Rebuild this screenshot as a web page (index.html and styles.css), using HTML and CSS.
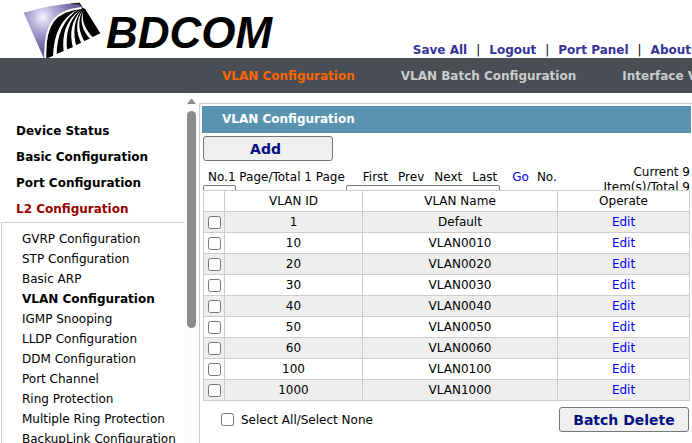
FILE: index.html
```html
<!DOCTYPE html>
<html lang="en">
<head>
<meta charset="utf-8">
<title>VLAN Configuration</title>
<link rel="stylesheet" href="styles.css">
</head>
<body>
<header class="top">
  <div class="brand">
    <svg class="mark" viewBox="0 0 240 174" aria-hidden="true">
      <defs>
        <radialGradient id="glow" cx="60" cy="52" r="100" gradientUnits="userSpaceOnUse">
          <stop offset="0" stop-color="#f6f4ff"/>
          <stop offset=".35" stop-color="#b9b2da"/>
          <stop offset=".8" stop-color="#7c72ac"/>
          <stop offset="1" stop-color="#6b629c"/>
        </radialGradient>
      </defs>
      <path fill="url(#glow)" d="M2 38Q88 12 170 8L182 26L120 60L74 174H62Z"/>
      <path fill="#222" d="M140 11Q156 8 170 8L180 25L168 14Z"/>
      <path fill="#000" d="M180 24Q118 26 92 60Q66 98 70 176L91 167L96 164L124 152L129 149L153 140L158 136L178 127L183 124L204 114L209 111L232 100L186 26Z"/>
      <g fill="none" stroke="#fff" stroke-width="6">
        <path d="M176 24Q116 30 91 62Q64 98 67 176"/>
      </g>
      <g fill="#fff">
        <path d="M166 28Q92 64 90 172L101 168Q100 74 166 28Z"/>
        <path d="M171 30Q112 72 122 156L133 154Q122 76 171 30Z"/>
        <path d="M175 31Q132 76 150 144L161 142Q142 78 175 31Z"/>
        <path d="M178 32Q148 76 176 132L187 128Q156 80 178 32Z"/>
        <path d="M181 33Q164 76 202 118L212 114Q172 76 181 33Z"/>
      </g>
    </svg>
    <span class="name">BDCOM</span>
  </div>
  <nav class="tools">
    <a href="#">Save All</a><span>|</span><a href="#">Logout</a><span>|</span><a href="#">Port Panel</a><span>|</span><a href="#">About</a>
  </nav>
</header>
<nav class="tabs">
  <a class="on" href="#">VLAN Configuration</a>
  <a href="#">VLAN Batch Configuration</a>
  <a href="#">Interface VLAN</a>
</nav>
<div class="main">
  <nav class="side">
    <a class="group" href="#">Device Status</a>
    <a class="group" href="#">Basic Configuration</a>
    <a class="group" href="#">Port Configuration</a>
    <a class="group open" href="#">L2 Configuration</a>
    <div class="sub">
      <a href="#">GVRP Configuration</a>
      <a href="#">STP Configuration</a>
      <a href="#">Basic ARP</a>
      <a class="current" href="#">VLAN Configuration</a>
      <a href="#">IGMP Snooping</a>
      <a href="#">LLDP Configuration</a>
      <a href="#">DDM Configuration</a>
      <a href="#">Port Channel</a>
      <a href="#">Ring Protection</a>
      <a href="#">Multiple Ring Protection</a>
      <a href="#">BackupLink Configuration</a>
    </div>
  </nav>
  <div class="scroll" aria-hidden="true"><i class="arrow"></i><i class="thumb"></i></div>
  <main class="panel">
    <h1>VLAN Configuration</h1>
    <div class="body">
      <button type="button">Add</button>
      <div class="pager">
        <div class="pages">
          <div class="links"><span>No.1 Page/Total 1 Page</span><span class="steps"><span>First</span><span>Prev</span><span>Next</span><span>Last</span></span><a href="#">Go</a><label for="page">No.</label></div>
          <div class="fields"><input id="page" class="short" type="text"><input class="long" type="text" aria-label="Search"></div>
        </div>
        <div class="count">Current 9 Item(s)/Total 9</div>
      </div>
      <table>
        <colgroup><col class="c1"><col class="c2"><col class="c3"><col class="c4"></colgroup>
        <thead><tr><th></th><th>VLAN ID</th><th>VLAN Name</th><th>Operate</th></tr></thead>
        <tbody>
          <tr><td><input type="checkbox" aria-label="VLAN 1"></td><td>1</td><td>Default</td><td><a href="#">Edit</a></td></tr>
          <tr><td><input type="checkbox" aria-label="VLAN 10"></td><td>10</td><td>VLAN0010</td><td><a href="#">Edit</a></td></tr>
          <tr><td><input type="checkbox" aria-label="VLAN 20"></td><td>20</td><td>VLAN0020</td><td><a href="#">Edit</a></td></tr>
          <tr><td><input type="checkbox" aria-label="VLAN 30"></td><td>30</td><td>VLAN0030</td><td><a href="#">Edit</a></td></tr>
          <tr><td><input type="checkbox" aria-label="VLAN 40"></td><td>40</td><td>VLAN0040</td><td><a href="#">Edit</a></td></tr>
          <tr><td><input type="checkbox" aria-label="VLAN 50"></td><td>50</td><td>VLAN0050</td><td><a href="#">Edit</a></td></tr>
          <tr><td><input type="checkbox" aria-label="VLAN 60"></td><td>60</td><td>VLAN0060</td><td><a href="#">Edit</a></td></tr>
          <tr><td><input type="checkbox" aria-label="VLAN 100"></td><td>100</td><td>VLAN0100</td><td><a href="#">Edit</a></td></tr>
          <tr><td><input type="checkbox" aria-label="VLAN 1000"></td><td>1000</td><td>VLAN1000</td><td><a href="#">Edit</a></td></tr>
        </tbody>
      </table>
      <div class="foot">
        <label><input type="checkbox">Select All/Select None</label>
        <button type="button">Batch Delete</button>
      </div>
    </div>
  </main>
</div>
</body>
</html>
```
FILE: styles.css
```css
* { box-sizing: border-box; }
body {
  margin: 0;
  height: 100vh;
  overflow: hidden;
  display: flex;
  flex-direction: column;
  background: #fff;
  color: #000;
  font: 12px/16px Verdana, "DejaVu Sans", sans-serif;
}
a { color: inherit; text-decoration: none; }

.top { height: 58px; flex: none; display: flex; justify-content: space-between; padding: 0 1px 0 23px; }
.brand { display: flex; align-items: flex-start; }
.mark { width: 80px; height: 58px; }
.name { padding-left: 3px; font: italic bold 44px/66px "Liberation Sans", Arial, sans-serif; }
.tools { align-self: flex-end; display: flex; gap: 9px; font-weight: bold; color: #339; white-space: nowrap; }
.tools span { color: #000; font-weight: normal; }

.tabs {
  height: 35px;
  flex: none;
  display: flex;
  align-items: center;
  gap: 46px;
  padding-left: 222px;
  background: #484e54;
  color: #ccc;
  font-weight: bold;
  white-space: nowrap;
  overflow: hidden;
}
.tabs .on { color: #f60; }

.main { flex: 1; min-height: 0; display: flex; }
.side { width: 184px; flex: none; padding-top: 25px; overflow: hidden; white-space: nowrap; }
.group { display: block; padding-left: 16px; font-weight: bold; line-height: 26px; }
.open { color: #900; }
.sub { margin-left: 1px; padding: 6px 0 0 20px; border: 1px solid #ccc; border-right: 0; }
.sub a { display: block; line-height: 20px; }
.sub .current { font-weight: bold; }

.scroll { width: 15px; flex: none; padding: 6px 3px; background: #fcfcfc; }
.arrow { display: block; border: 4px solid transparent; border-top: 0; border-bottom: 5px solid #8b8b8b; }
.thumb { display: block; width: 9px; height: 217px; margin-top: 7px; border-radius: 5px; background: #8b8b8b; }

.panel { flex: 1; min-width: 0; margin-top: 10px; padding: 2px 1px 0 2px; border: 1px solid #ccc; border-width: 1px 0 0 1px; }
h1 { margin: 0; padding-left: 20px; background: #5a93b0; color: #fff; font-size: 12px; line-height: 27px; }
.body { padding: 3px 1px 0; }
button {
  display: block;
  width: 130px;
  height: 25px;
  padding: 0;
  border: 1px solid #767676;
  border-radius: 3px;
  background: #efefef;
  color: #001080;
  font: bold 14px/20px Verdana, "DejaVu Sans", sans-serif;
}
.body > button { padding-right: 5px; }

.pager { height: 29px; display: flex; justify-content: space-between; overflow: hidden; white-space: nowrap; }
.pages { padding-top: 9px; }
.links { display: flex; padding-left: 5px; line-height: 15px; }
.steps { display: flex; gap: 10px; padding: 0 15px 0 18px; }
.links a, td a { color: #00f; }
.links label { padding-left: 8px; }
.fields { display: flex; gap: 110px; }
.fields input { height: 21px; border: 1px solid #767676; border-radius: 2px; }
.short { width: 33px; }
.long { width: 154px; }
.count { width: 100px; padding-top: 4px; text-align: right; line-height: 15px; white-space: normal; }

table { width: 100%; table-layout: fixed; border-collapse: collapse; }
.c1 { width: 21px; }
.c2 { width: 138px; }
.c3 { width: 195px; }
th, td { height: 21px; padding: 0; border: 1px solid #ccc; text-align: center; font-weight: normal; line-height: 20px; }
tbody tr:nth-child(odd) { background: #eee; }
input[type="checkbox"] { width: 13px; height: 13px; margin: 0; }
td input[type="checkbox"] { display: block; margin: 0 auto; }
td:first-child { padding-left: 1px; }

.foot { display: flex; justify-content: space-between; padding: 6px 1px 0 18px; }
.foot label { display: flex; align-items: center; gap: 7px; }
```
